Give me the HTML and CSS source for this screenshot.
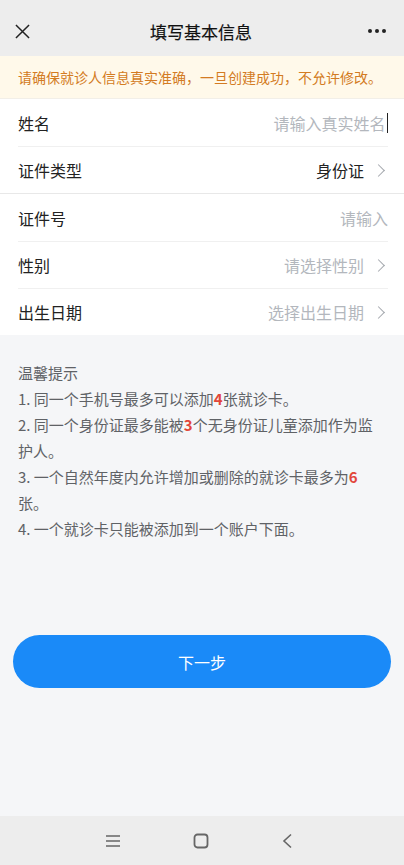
FILE: index.html
```html
<!DOCTYPE html>
<html lang="zh-CN">
<head>
    <meta charset="UTF-8">
    <meta name="viewport" content="width=device-width, initial-scale=1.0">
    <title>填写基本信息</title>
    <link rel="stylesheet" href="styles.css">
</head>
<body>
    <div class="page">
        <header class="nav-bar">
            <span class="nav-close">
                <svg width="15" height="15" viewBox="0 0 16 16"><path d="M1 1 L15 15 M15 1 L1 15" stroke="#222" stroke-width="1.6" fill="none"/></svg>
            </span>
            <h1 class="nav-title">填写基本信息</h1>
            <span class="nav-more"><i></i><i></i><i></i></span>
        </header>

        <div class="notice">请确保就诊人信息真实准确，一旦创建成功，不允许修改。</div>

        <div class="form">
            <div class="group">
                <div class="row">
                    <span class="label">姓名</span>
                    <span class="value placeholder">请输入真实姓名<span class="cursor"></span></span>
                </div>
                <div class="row">
                    <span class="label">证件类型</span>
                    <span class="value">身份证</span>
                    <span class="arrow"></span>
                </div>
            </div>
            <div class="group">
                <div class="row">
                    <span class="label">证件号</span>
                    <span class="value placeholder">请输入</span>
                </div>
                <div class="row">
                    <span class="label">性别</span>
                    <span class="value placeholder">请选择性别</span>
                    <span class="arrow"></span>
                </div>
                <div class="row">
                    <span class="label">出生日期</span>
                    <span class="value placeholder">选择出生日期</span>
                    <span class="arrow"></span>
                </div>
            </div>
        </div>

        <div class="tips">
            <p>温馨提示</p>
            <p>1. 同一个手机号最多可以添加<b>4</b>张就诊卡。</p>
            <p>2. 同一个身份证最多能被<b>3</b>个无身份证儿童添加作为监护人。</p>
            <p>3. 一个自然年度内允许增加或删除的就诊卡最多为<b>6</b>张。</p>
            <p>4. 一个就诊卡只能被添加到一个账户下面。</p>
        </div>

        <div class="actions">
            <button class="next-button">下一步</button>
        </div>

        <footer class="sys-bar">
            <svg width="16" height="14" viewBox="0 0 16 14"><path d="M1 2 H15 M1 7 H15 M1 12 H15" stroke="#666" stroke-width="1.6"/></svg>
            <svg width="16" height="16" viewBox="0 0 16 16"><rect x="1.5" y="1.5" width="13" height="13" rx="3" stroke="#666" stroke-width="1.8" fill="none"/></svg>
            <svg width="12" height="16" viewBox="0 0 12 16"><path d="M10 1.5 L3 8 L10 14.5" stroke="#666" stroke-width="1.6" fill="none"/></svg>
        </footer>
    </div>
</body>
</html>
```

FILE: styles.css
```css
body {
    margin: 0;
    padding: 0;
    font-family: "Noto Sans CJK SC", "Noto Sans", sans-serif;
    background-color: #f5f6f8;
    color: #222222;
}

.page {
    height: 865px;
    display: flex;
    flex-direction: column;
}

/* Top navigation */
.nav-bar {
    height: 56px;
    background-color: #ededed;
    display: flex;
    align-items: center;
    justify-content: space-between;
    padding: 0 18px 0 10px;
    flex-shrink: 0;
}

.nav-close {
    width: 24px;
    display: flex;
    justify-content: center;
    margin-top: 6px;
}

.nav-title {
    margin: 6px 0 0;
    font-size: 17px;
    font-weight: normal;
    color: #111111;
    -webkit-text-stroke: 0.2px #111111;
}

.nav-more {
    display: flex;
    gap: 3px;
    margin-top: 6px;
}

.nav-more i {
    width: 4px;
    height: 4px;
    border-radius: 50%;
    background-color: #222222;
}

/* Warning notice */
.notice {
    height: 42px;
    line-height: 42px;
    background-color: #fff9ea;
    color: #d37b22;
    font-size: 14px;
    padding: 0 18px;
    border-bottom: 1px solid #f2efe8;
}

/* Form rows */
.form {
    background-color: #ffffff;
}

.group + .group {
    border-top: 1px solid #e8e8e8;
}

.row {
    height: 47px;
    box-sizing: border-box;
    margin: 0 16px 0 18px;
    display: flex;
    align-items: center;
    font-size: 16px;
}

.group .row + .row {
    border-top: 1px solid #f0f0f0;
}

.label {
    flex: 1;
    color: #222222;
}

.value {
    color: #222222;
    display: flex;
    align-items: center;
}

.placeholder {
    color: #b3b7bd;
}

.cursor {
    width: 1.5px;
    height: 20px;
    background-color: #222222;
    margin-left: 1px;
}

.arrow {
    width: 8px;
    height: 8px;
    border-top: 1.3px solid #a3a7ad;
    border-right: 1.3px solid #a3a7ad;
    transform: rotate(45deg);
    margin: 0 5px 0 10px;
}

/* Tips */
.tips {
    padding: 25px 24px 0 18px;
    font-size: 15px;
    line-height: 26px;
    color: #5f6266;
}

.tips p {
    margin: 0;
}

.tips b {
    color: #e2463a;
    font-weight: bold;
}

/* Button */
.actions {
    padding: 93px 13px 0;
}

.next-button {
    width: 100%;
    height: 53px;
    border: none;
    border-radius: 27px;
    background-color: #1a8af8;
    color: #ffffff;
    font-family: inherit;
    font-size: 16px;
}

/* Android system bar */
.sys-bar {
    margin-top: auto;
    height: 49px;
    background-color: #ededed;
    display: flex;
    align-items: center;
    justify-content: center;
    gap: 72px;
    padding-right: 6px;
    flex-shrink: 0;
}
```
